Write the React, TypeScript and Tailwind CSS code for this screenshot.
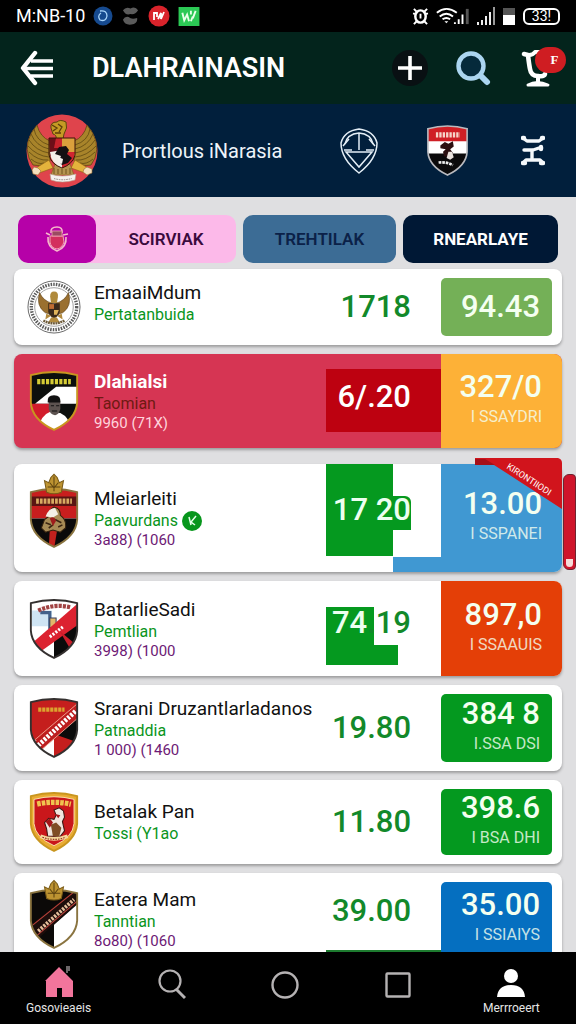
import type { ReactNode } from "react";
import clsx from "clsx";

type CrestKind =
  | "garuda"
  | "portrait"
  | "crowned"
  | "sash"
  | "redSash"
  | "gold"
  | "black"
  | "tricolor";

type Row = {
  id: number;
  crest: CrestKind;
  name: string;
  team: string;
  meta?: string;
  verified?: boolean;
  value: string;
  price: string;
  unit?: string;
  height: string;
  card: string;
  nameClass: string;
  teamClass: string;
  metaClass: string;
  valueClass: string;
  tile: string;
  inset: boolean;
};

const FONT = "font-['Roboto','Noto_Sans',sans-serif]";

const light = {
  card: "bg-white",
  nameClass: "text-[#111111]",
  teamClass: "text-[#0a951c]",
  metaClass: "text-[#6d1a75]",
  valueClass: "text-[#12892a]",
};

const rows: Row[] = [
  {
    ...light,
    id: 1,
    crest: "garuda",
    name: "EmaaiMdum",
    team: "Pertatanbuida",
    value: "1718",
    price: "94.43",
    height: "min-h-[76px]",
    teamClass: "text-[#0a951c] pb-2",
    tile: "bg-[#74b057]",
    inset: true,
  },
  {
    id: 2,
    crest: "portrait",
    name: "Dlahialsi",
    team: "Taomian",
    meta: "9960 (71X)",
    value: "6/.20",
    price: "327/0",
    unit: "I SSAYDRI",
    height: "min-h-[94px]",
    card: "bg-[#d63553] mb-[7px]",
    nameClass: "text-white font-bold",
    teamClass: "text-[#6e1a12]",
    metaClass: "text-[#ffd3dc]",
    valueClass: "text-white pb-2",
    tile: "bg-[#fdb137]",
    inset: false,
  },
  {
    ...light,
    id: 3,
    crest: "crowned",
    name: "Mleiarleiti",
    team: "Paavurdans",
    meta: "3a88) (1060",
    verified: true,
    value: "17 20",
    price: "13.00",
    unit: "I SSPANEI",
    height: "min-h-[108px]",
    valueClass: "text-[#ecfff0] pb-4",
    tile: "bg-[#4098d2]",
    inset: false,
  },
  {
    ...light,
    id: 4,
    crest: "sash",
    name: "BatarlieSadi",
    team: "Pemtlian",
    meta: "3998) (1000",
    value: "74.19",
    price: "897,0",
    unit: "I SSAAUIS",
    height: "min-h-[95px]",
    valueClass: "text-[#12892a] pb-3",
    tile: "bg-[#e43f07]",
    inset: false,
  },
  {
    ...light,
    id: 5,
    crest: "redSash",
    name: "Srarani Druzantlarladanos",
    team: "Patnaddia",
    meta: "1 000) (1460",
    value: "19.80",
    price: "384 8",
    unit: "I.SSA DSI",
    height: "min-h-[86px]",
    tile: "bg-[#04991f]",
    inset: true,
  },
  {
    ...light,
    id: 6,
    crest: "gold",
    name: "Betalak Pan",
    team: "Tossi (Y1ao",
    value: "11.80",
    price: "398.6",
    unit: "I BSA DHI",
    height: "min-h-[84px]",
    tile: "bg-[#04991f]",
    inset: true,
  },
  {
    ...light,
    id: 7,
    crest: "black",
    name: "Eatera Mam",
    team: "Tanntian",
    meta: "8o80) (1060",
    value: "39.00",
    price: "35.00",
    unit: "I SSIAIYS",
    height: "min-h-[92px]",
    valueClass: "text-[#12892a] pb-4",
    tile: "bg-[#056fc0]",
    inset: true,
  },
];

const SHIELD = "M3 4Q25 -2 47 4V30Q46 46 25 56Q4 46 3 30Z";

function HeaderGaruda() {
  return (
    <svg viewBox="0 0 72 74" className="h-[74px] w-[72px]" aria-hidden="true">
      <ellipse cx="36" cy="37" rx="35.5" ry="36.5" fill="#df444c" />
      <g fill="#a8842a" stroke="#55400f" strokeWidth=".7">
        <path d="M11 11Q-3 27 3 44L7 51Q17 53 24 47V27Q14 23 11 11Z" />
        <path d="M61 11Q75 27 69 44L65 51Q55 53 48 47V27Q58 23 61 11Z" />
        <path
          fill="none"
          d="M8 15Q10 27 23 31M5 20Q10 32 23 35M3 26Q10 37 23 39M2 32Q11 42 23 43M3 38Q12 47 22 46M5 45Q12 51 18 49M64 15Q62 27 49 31M67 20Q62 32 49 35M69 26Q62 37 49 39M70 32Q61 42 49 43M69 38Q60 47 50 46M67 45Q60 51 54 49"
        />
      </g>
      <g fill="#e4b33c" stroke="#8a5b14" strokeWidth=".6">
        <path d="M23 46L10 54L13 59L27 54Z" />
        <path d="M49 46L62 54L59 59L45 54Z" />
        <path d="M29 50H44L48 61H25Z" fill="#b4934f" />
      </g>
      <path d="M25 14Q24 8 31 8Q34 5 40 8Q42 14 38 20L37 25H30Q31 21 27 20Z" fill="#c59a24" stroke="#5d440c" />
      <path d="M26 11l5 3-4 3M32 10l4 3-3 5M29 19l6 0" fill="none" stroke="#5d3c0b" strokeWidth="1.300" />
      <path d="M23 24H36V40L24 42Z" fill="#6d0e18" />
      <path d="M36 24H49V42H36Z" fill="#dba03c" />
      <path d="M30 24h6v10h-8Z" fill="#c8222c" />
      <path d="M24 38L36 36V54Q25 50 24 38Z" fill="#f3eee8" />
      <path d="M36 38H49Q48 50 36 54Z" fill="#d02530" />
      <path d="M33 33l7-1 3 4-2 4 5 4-4 5-6 2-3-4 2-5-6-2Z" fill="#141012" />
      <path d="M32 43l5 2-1 5-4-2Z" fill="#f4f0ec" />
      <path d="M23 24H49V41Q47 50 36 54Q25 50 23 41Z" fill="none" stroke="#3a1508" />
      <path d="M28 54v6M32 55v5M36 55v5M40 55v5M44 54v6" stroke="#6f531e" />
      <path d="M24 60Q36 64 50 60L49 66Q36 70 25 66Z" fill="#f5f1ee" stroke="#b6a08f" strokeWidth=".6" />
      <path d="M28 64.500Q36 67 46 64.500" fill="none" stroke="#8f8580" strokeDasharray="1.500 1" />
      <path d="M8 53l4 1 3 3-3 4-5-1-1-4ZM58 55l3-2 5 2 0 4-5 2-4-3Z" fill="#f4dfbd" stroke="#9c6b2d" strokeWidth=".6" />
    </svg>
  );
}

function CardGaruda() {
  return (
    <svg viewBox="0 0 56 56" className="-mx-0.5 size-[54px] shrink-0" aria-hidden="true">
      <circle cx="28" cy="28" r="27" fill="#fff" stroke="#666" strokeWidth="1" />
      <circle cx="28" cy="28" r="23.500" fill="none" stroke="#5b5b5b" strokeWidth="3.500" strokeDasharray="1.600 1.200" />
      <circle cx="28" cy="28" r="20" fill="none" stroke="#888" strokeWidth=".8" />
      <path d="M13 13Q9 27 19 34L26 36V24Q17 22 13 13ZM43 13Q47 27 37 34L30 36V24Q39 22 43 13Z" fill="#9a7030" stroke="#5d421b" strokeWidth=".6" />
      <path d="M24 17Q24 12 28 12Q33 12 32 18L31 24H25Z" fill="#b08a3c" />
      <path d="M22 24H34V33Q33 38 28 40Q23 38 22 33Z" fill="#3b2a1b" />
      <path d="M23 25h5v5h-5Z" fill="#c06d33" />
      <path d="M28 31h5l-2 5h-3Z" fill="#e0b35a" />
      <path d="M20 35l5 2-6 4ZM36 35l-5 2 6 4ZM25 39h6l3 5H22Z" fill="#b28a3e" />
      <path d="M17 42q11 6 22 0" fill="none" stroke="#6c5a3a" strokeWidth="2.500" strokeDasharray="2 .6" />
    </svg>
  );
}

function Crest({ kind, className }: { kind: CrestKind; className: string }) {
  const id = `crest-${kind}`;
  return (
    <svg viewBox="2 0 46 57" className={clsx("shrink-0 overflow-visible", className)} aria-hidden="true">
      <clipPath id={id}>
        <path d={SHIELD} />
      </clipPath>
      <g clipPath={`url(#${id})`}>
        {kind === "portrait" && (
          <>
            <path d="M0 0h50v58H0Z" fill="#0c0f0d" />
            <path d="M7 31L27 15H50V31Z" fill="#fff" />
            <path d="M0 31H22V58H0Z" fill="#d21c2c" />
            <path d="M9 58Q12 42 21 39L31 40Q40 44 42 58Z" fill="#fff" />
            <path d="M20 28h11v8q-1 5-5 6q-5-1-6-6Z" fill="#5c5350" />
            <path d="M19 30Q18 23 25 23Q32 23 31 30Z" fill="#111" />
            <path d="M22 33h3M27 33h3M23 38h5" stroke="#111" />
            <path d="M9 10h32" stroke="#d5cc36" strokeWidth="5" strokeDasharray="3 1.2" />
          </>
        )}
        {kind === "crowned" && (
          <>
            <path d="M0 0h50v29H0Z" fill="#c81e1e" />
            <path d="M0 29h50v29H0Z" fill="#0b0a0a" />
            <path d="M3 8h44v9H3Z" fill="#5a1512" />
            <path d="M8 12.5h34" stroke="#d7ab62" strokeWidth="5" strokeDasharray="2.6 1" />
            <path d="M21 40h7l-3 18h-5Z" fill="#c3211d" />
            <path d="M13 38l3-8 4-3q0-6 5-9q6 1 6 8q6 4 5 12l-5 4-7-2-7 2Z" fill="#a78b55" stroke="#33210e" />
            <path d="M17 27q3-8 9-8l3 6-5 3Z" fill="#f3efe6" />
            <path d="M17 33l5 2M26 30l6 3M20 38l4-3M29 37l4-2" stroke="#3b2612" strokeWidth="1.500" />
            <path d="M21 29q4-3 6 2l-3 5Z" fill="#9e1c1c" />
          </>
        )}
        {kind === "sash" && (
          <>
            <path d="M0 0h50v58H0Z" fill="#fff" />
            <path d="M25 58V34L50 8V58Z" fill="#0b0b0b" />
            <path d="M4 11h19v15H4Z" fill="#cfe4f3" />
            <path d="M12 13h9v14h6" fill="none" stroke="#44618a" strokeWidth="3" />
            <path d="M21 18h6v9h-6Z" fill="#e2b76a" stroke="#3b3f5c" />
            <path d="M3 43L50 2V23L12 50Z" fill="#dc2230" />
            <path d="M21 36L34 26" stroke="#fff" strokeWidth="3" strokeDasharray="2 1.4" />
            <path d="M10 11Q26 4 41 8" fill="none" stroke="#a14343" strokeWidth="4" strokeDasharray="3 1" />
            <path d="M30 30L50 47V56L42 50Z" fill="#c81e2a" />
          </>
        )}
        {kind === "redSash" && (
          <>
            <path d="M0 0h50v58H0Z" fill="#c51e1d" />
            <path d="M25 36V58H0V42Z" fill="#fff" />
            <path d="M27 35L50 14V43Z" fill="#0b0b0b" />
            <path d="M3 45L50 4V17L10 52Z" fill="#bc1d1e" />
            <path d="M3 43L50 3M11 51L50 17" stroke="#f0b3a0" strokeWidth=".8" />
            <path d="M10 45L46 12" stroke="#fff" strokeWidth="4.5" strokeDasharray="2.4 1.4" />
            <path d="M10 11h25" stroke="#dba32f" strokeWidth="4" strokeDasharray="3 .8" />
          </>
        )}
        {kind === "gold" && (
          <>
            <path d="M0 0h50v58H0Z" fill="#e9ab32" />
            <path d="M6 7Q25 2 44 7V30Q43 43 25 51Q7 43 6 30Z" fill="#c9171b" stroke="#fff1c4" strokeWidth=".8" />
            <path d="M9 11.5Q25 8 41 11.5" fill="none" stroke="#f0c34f" strokeWidth="5" strokeDasharray="3.4 1" />
            <path d="M25 17l5-2 4 3 1 6-2 4 2 9-4 5H19l-1-7-2-6 4-4 5 1 2-4Z" fill="#f0e5de" stroke="#3c1612" />
            <path d="M22 31l5-2 5 5-2 8h-6Z" fill="#7e4d26" />
            <path d="M17 28l4-3 3 4-3 5ZM26 21l5 1-2 3Z" fill="#a5161a" />
            <path d="M12 42q13 5 26 0" fill="none" stroke="#f3d79b" strokeWidth="3.5" />
            <path d="M14 43q12 4 22 0" fill="none" stroke="#8b2417" strokeDasharray="1.5 1" />
          </>
        )}
        {kind === "black" && (
          <>
            <path d="M0 0h50v58H0Z" fill="#0b0908" />
            <path d="M25 58V34L50 12V58Z" fill="#fff" />
            <path d="M3 34L50 -3V11L8 49Z" fill="#1d0d0b" />
            <path d="M5 34L50 -2M9 44L50 9" stroke="#b8413a" strokeWidth="1" />
            <path d="M10 40L44 10" stroke="#e4bd9a" strokeWidth="3.6" strokeDasharray="2.2 1.2" />
          </>
        )}
        {kind === "tricolor" && (
          <>
            <path d="M0 0h50v20H0Z" fill="#cf1f25" />
            <path d="M0 18h50v15H0Z" fill="#fff" />
            <path d="M0 32h50v26H0Z" fill="#0b0a0b" />
            <path d="M12 11h27" stroke="#f6d5c9" strokeWidth="6" strokeDasharray="2.6 1.2" />
            <path d="M17 23l5-4 4 2 5-3 1 6-4 3 3 4-4 5-6-1-1-5 3-3-6-1Z" fill="#2b1011" />
            <path d="M26 30l4 0 2 6-4 3-4-2Z" fill="#e9e1dc" />
            <path d="M15 42q9-1 16 3" fill="none" stroke="#eee" strokeWidth="3" strokeDasharray="3 1" />
          </>
        )}
      </g>
      <path
        d={SHIELD}
        fill="none"
        strokeWidth="1.8"
        stroke={
          kind === "portrait" || kind === "gold"
            ? "#c9961f"
            : kind === "crowned" || kind === "black"
              ? "#8a7440"
              : kind === "tricolor"
                ? "#b9babf"
                : "#34302f"
        }
      />
      {(kind === "crowned" || kind === "black") && (
        <g transform={kind === "black" ? "translate(0 5)" : undefined}>
          <path
            d="M18 4L16 -7L20 -5L22 -10L25 -13L28 -10L30 -5L34 -7L32 4Q25 7 18 4Z"
            fill="#bd9331"
            stroke="#7a5b18"
          />
          <path d="M19 -1H31M21 -5L25 0L29 -5M25 -11V3" fill="none" stroke="#5d4310" />
        </g>
      )}
    </svg>
  );
}

function StatusBar() {
  return (
    <div className="flex h-8 shrink-0 items-center bg-black px-4 text-white">
      <span className="w-[77px] text-[18px] leading-6">M:NB-10</span>
      <div className="flex items-center gap-2">
        <svg viewBox="0 0 20 20" className="size-5" aria-hidden="true">
          <circle cx="10" cy="10" r="9.5" fill="#164a8f" />
          <path d="M7 5Q14 4 14 10Q13 16 7 14Q4 10 8 7" fill="none" stroke="#a9d5fa" strokeWidth="1.3" />
        </svg>
        <svg viewBox="0 0 18 20" className="mx-[1px] h-5 w-[17px]" aria-hidden="true">
          <path d="M1 4Q4 0 9 2Q14 -1 17 4Q14 9 9 8Q4 10 1 4ZM1 14Q3 10 7 11Q10 14 16 12Q17 18 10 19Q3 20 1 14Z" fill="#5b5b5b" />
        </svg>
        <svg viewBox="0 0 22 22" className="size-[22px]" aria-hidden="true">
          <circle cx="11" cy="11" r="10.5" fill="#d9232b" />
          <path d="M6 15V8h3v4M10 14l3-6v6l3-7" fill="none" stroke="#fff" strokeWidth="1.8" />
        </svg>
        <svg viewBox="0 0 22 20" className="h-[19px] w-[22px]" aria-hidden="true">
          <path d="M0 0h22v20H0Z" fill="#2cc955" />
          <path d="M4 6l2 8 3-6 2 7M13 4v4M13 15l2-5M18 4l-3 8" fill="none" stroke="#e9ffe9" strokeWidth="2" />
        </svg>
      </div>
      <div className="ml-auto flex items-center">
        <svg viewBox="0 0 18 20" className="h-[19px] w-[17px]" fill="none" stroke="#fff" strokeWidth="2" aria-hidden="true">
          <ellipse cx="9" cy="10" rx="5.5" ry="6.5" strokeWidth="2.600" />
          <path d="M2 2l3 3M16 2l-3 3M2 18l3-3M16 18l-3-3M1 7h3M14 7h3M9 7v5" />
        </svg>
        <svg viewBox="0 0 36 20" className="ml-1.5 h-[19px] w-9" aria-hidden="true">
          <path d="M1 6Q11 -2 22 6M4 10Q11 4 18 10M7 13Q11 10 15 13" fill="none" stroke="#fff" strokeWidth="2" />
          <path d="M11 17l-2-2h4Z" fill="#fff" />
          <path d="M20 18v-2M24 18v-5M28 18v-10" stroke="#fff" strokeWidth="2" />
          <path d="M33 18V2" stroke="#555" strokeWidth="3" />
        </svg>
        <svg viewBox="0 0 18 18" className="ml-1.5 h-[18px] w-[18px]" aria-hidden="true">
          <path d="M1 18v-3M5 18v-5M9 18v-9M13 18V5" stroke="#eee" strokeWidth="2" />
          <path d="M17 18V0" stroke="#999" strokeWidth="2" />
        </svg>
        <svg viewBox="0 0 12 17" className="ml-2 h-[17px] w-3" aria-hidden="true">
          <path d="M0 0h12v17H0Z" fill="#555" />
          <path d="M0 7h12v10H0Z" fill="#fff" />
        </svg>
        <span className="ml-2 flex h-[17px] w-[37px] items-center justify-center rounded-[6px] border-2 border-white text-[14px] leading-4">
          33!
        </span>
      </div>
    </div>
  );
}

function Header() {
  return (
    <header className="flex h-[72px] shrink-0 items-center bg-[#03241c] pr-2.5 pl-5 text-white">
      <button type="button" aria-label="Back" className="h-9 w-[34px]">
        <svg viewBox="0 0 34 36" className="h-9 w-[34px]" fill="none" stroke="currentColor" strokeWidth="3.4">
          <path d="M15 3L3 18L15 33" strokeWidth="4.4" strokeLinecap="round" strokeLinejoin="round" />
          <path d="M11 11H33M4 18.500H33M11 26H33" />
        </svg>
      </button>
      <h1 className="ml-[38px] text-[27px] leading-9 font-semibold">DLAHRAINASIN</h1>
      <button type="button" aria-label="Add" className="ml-auto flex size-9 items-center justify-center rounded-full bg-[#091013]">
        <svg viewBox="0 0 24 24" className="size-6" stroke="currentColor" strokeWidth="3.6">
          <path d="M12 0V24M0 12H24" />
        </svg>
      </button>
      <button type="button" aria-label="Search" className="ml-7 size-9">
        <svg viewBox="0 0 36 36" className="size-9" fill="none" stroke="#abd5f0">
          <circle cx="15" cy="16" r="12.500" strokeWidth="4.400" fill="#052a3b" />
          <path d="M25 26L31 32" strokeWidth="6" strokeLinecap="round" />
        </svg>
      </button>
      <button type="button" aria-label="Cart" className="relative ml-7 h-[46px] w-[46px]">
        <svg viewBox="0 0 46 46" className="h-[46px] w-[46px]" fill="none" stroke="#fff" strokeLinecap="round" strokeLinejoin="round" aria-hidden="true">
          <path d="M4 9L8 10Q9 19 10 24Q11 31 18 31Q24 32 25 29" strokeWidth="4.600" />
          <path d="M9 10Q13 10 15 7H20" strokeWidth="4" />
          <path d="M18 31V37" strokeWidth="4" />
          <path d="M8 40Q17 35 28 40Z" fill="#fff" strokeWidth="3" />
        </svg>
        <span className="absolute top-[2px] right-0 flex h-[26px] w-[31px] items-center justify-center rounded-full bg-[#cf1d22] pl-2 font-['Liberation_Serif',serif] text-[13px] leading-4 font-bold">
          F
        </span>
      </button>
    </header>
  );
}

function LeagueBar() {
  return (
    <div className="flex h-[93px] shrink-0 items-center bg-[#011f3c] pr-[31px] pl-[26px] text-[#eef4fa]">
      <HeaderGaruda />
      <h2 className="ml-6 text-[20px] leading-8">Prortlous iNarasia</h2>
      <button type="button" aria-label="League badge" className="ml-auto h-[46px] w-[38px]">
        <svg viewBox="0 0 38 46" className="h-[46px] w-[38px]" fill="none" stroke="#e4eef6" strokeWidth="1.500">
          <path d="M19 1Q34 3 37 15Q37 31 19 45Q1 31 1 15Q4 3 19 1Z" />
          <path d="M5 16Q7 6 19 5Q31 6 33 16M6 24H32L19 39Z" />
          <path d="M19 6V22M3 18L9 11M35 18L29 11M4 22H12M26 22H34" />
        </svg>
      </button>
      <button type="button" aria-label="Club badge" className="ml-[49px] h-[51px] w-[41px]">
        <Crest kind="tricolor" className="h-[51px] w-[41px]" />
      </button>
      <button type="button" aria-label="Filter" className="ml-[53px] h-8 w-6">
        <svg viewBox="0 0 24 32" className="h-8 w-6" fill="none" stroke="#f5f9fc" strokeWidth="3.400" strokeLinecap="round" strokeLinejoin="round">
          <path d="M2 3L6 6H18L22 3M3 15H12L18 13M11 15V23M2 28L5 25H19L22 28" />
          <path d="M2 3H3M21 3H22M2 28H4M20 28H22M20 12V14" strokeWidth="4.400" />
        </svg>
      </button>
    </div>
  );
}

function Tabs() {
  return (
    <nav className="grid h-12 grid-cols-[218fr_153fr_155fr] gap-[7px] px-1 text-[17px] leading-6">
      <button type="button" className="flex items-stretch rounded-[10px] bg-[#fcb9e9] text-[#3a0a3d]">
        <span className="flex w-[78px] items-center justify-center rounded-[10px] bg-[#b601a8]">
          <svg viewBox="0 0 24 26" className="h-[26px] w-6" aria-hidden="true">
            <path d="M6 7Q5 1 12 1Q18 1 17 7M1 7L5 9M23 8L18 9M3 11Q2 21 12 25Q22 21 21 11" fill="none" stroke="#f5b8c9" strokeWidth="1.600" />
            <path d="M5 10H18L19 16Q17 22 12 23Q6 22 5 16Z" fill="#d3305e" stroke="#f3a3b4" />
            <path d="M7 5h10v5H7Z" fill="#9b4b62" stroke="#f3a3b4" strokeWidth=".8" />
          </svg>
        </span>
        <span className="flex flex-1 items-center justify-center font-semibold">SCIRVIAK</span>
      </button>
      <button type="button" className="rounded-[10px] bg-[#3c6c95] font-semibold text-[#0b2148]">
        TREHTILAK
      </button>
      <button type="button" className="rounded-[10px] bg-[#001835] font-bold text-white">
        RNEARLAYE
      </button>
    </nav>
  );
}

// coloured blocks that sit behind the middle figure
function ValueBackdrop({ id }: { id: number }) {
  if (id === 2) {
    return <div className="absolute inset-x-0 top-[15px] bottom-4 bg-[#bd0110]" />;
  }
  if (id === 3) {
    return (
      <>
        <div className="absolute top-0 bottom-4 left-0 w-[67px] bg-[#05991f]" />
        <div className="absolute top-8 left-[67px] h-[34px] w-[18px] rounded-tr-[6px] bg-[#05991f]" />
        <div className="absolute right-0 bottom-0 left-[67px] h-[15px] bg-[#4098d2]" />
      </>
    );
  }
  if (id === 4) {
    return (
      <>
        <div className="absolute top-[26px] bottom-[11px] left-0 w-12 bg-[#05991f]" />
        <div className="absolute bottom-[11px] left-0 h-5 w-[72px] bg-[#05991f]" />
      </>
    );
  }
  if (id === 7) {
    return <div className="absolute inset-x-0 bottom-0 h-[15px] bg-[#1d7b2f]" />;
  }
  return null;
}

function Ribbon() {
  return (
    <svg viewBox="0 0 87 51" className="absolute -top-1.5 right-0 h-[51px] w-[87px]" aria-hidden="true">
      <path d="M0 0H83Q87 1 87 5V51L19 7H0Z" fill="#d1141c" />
      <path d="M0 1H10L20 7H0Z" fill="#a50f18" />
      <text x="31" y="10" transform="rotate(33 31 10)" fill="#fff" fontSize="9" fontFamily="Roboto">
        KIRONTIIODI
      </text>
    </svg>
  );
}

function Value({ row }: { row: Row }) {
  if (row.id !== 4) return <>{row.value}</>;
  return (
    <>
      <span className="text-[#ecfff0]">74</span>.19
    </>
  );
}

function ClubCard({ row }: { row: Row }) {
  return (
    <li
      className={clsx(
        "relative flex rounded-[8px] shadow-[0_2px_3px_rgba(0,0,0,0.3)]",
        row.card,
        row.height,
      )}
    >
      <div className="flex min-w-0 flex-1 items-center pl-[15px]">
        {row.crest === "garuda" ? (
          <CardGaruda />
        ) : (
          <Crest kind={row.crest} className="h-[60px] w-[50px]" />
        )}
        <div className="ml-[15px] whitespace-nowrap">
          <div className={clsx("text-[19px] leading-6", row.nameClass)}>{row.name}</div>
          <div className={clsx("flex items-center gap-1 text-[16px] leading-5", row.teamClass)}>
            {row.team}
            {row.verified && (
              <svg viewBox="0 0 20 20" className="size-5" aria-hidden="true">
                <circle cx="10" cy="10" r="10" fill="#07961c" />
                <path d="M7 6l2 8M14 5l-5 6 4 3" fill="none" stroke="#e5ffe9" strokeWidth="1.500" />
              </svg>
            )}
          </div>
          {row.meta && <div className={clsx("text-[15px] leading-[18px]", row.metaClass)}>{row.meta}</div>}
        </div>
      </div>
      <div className="relative flex w-[115px] shrink-0">
        <ValueBackdrop id={row.id} />
        <div
          className={clsx(
            "relative flex flex-1 items-center justify-end pr-[30px] text-[31px] leading-9 font-medium whitespace-nowrap",
            row.valueClass,
          )}
        >
          <span>
            <Value row={row} />
          </span>
        </div>
      </div>
      <div className={clsx("flex w-[121px] shrink-0", row.inset && "py-[9px] pr-[10px]")}>
        <div
          className={clsx(
            "flex flex-1 flex-col items-end justify-center text-[#f4fff0]",
            row.tile,
            row.inset ? "rounded-[5px] pr-3" : "rounded-r-[8px] pr-5",
          )}
        >
          <div className="text-[31px] leading-8 font-medium whitespace-nowrap">{row.price}</div>
          {row.unit && <div className="text-[16px] leading-7 opacity-80">{row.unit}</div>}
        </div>
      </div>
      {row.id === 3 && <Ribbon />}
    </li>
  );
}

function NavItem({ label, text, children }: { label: string; text?: string; children: ReactNode }) {
  return (
    <button type="button" aria-label={label} className="flex flex-col items-center pt-3.5 text-[12px] leading-4">
      {children}
      {text && <span className="mt-0.5">{text}</span>}
    </button>
  );
}

function BottomNav() {
  return (
    <nav className="grid h-[72px] shrink-0 grid-cols-5 bg-black pr-2 pl-0.5 text-[#e6e6e6]">
      <NavItem label="Home" text="Gosovieaeis">
        <svg viewBox="0 0 28 32" className="h-8 w-7" aria-hidden="true">
          <path d="M14 1L28 15V31H17V22H12V31H1V15H0Z" fill="#f2759c" />
          <path d="M22 0v7M24 0v5" stroke="#6b6668" strokeWidth="2" />
        </svg>
      </NavItem>
      <NavItem label="Search">
        <svg viewBox="0 0 28 32" className="mt-0.5 h-8 w-7" fill="none" stroke="#b5b2b3" strokeWidth="2.200">
          <circle cx="12" cy="13" r="10.500" />
          <path d="M18 21L27 30" strokeWidth="3" />
        </svg>
      </NavItem>
      <NavItem label="Overview">
        <svg viewBox="0 0 28 28" className="mt-[5px] size-7" fill="none" stroke="#b5b2b3" strokeWidth="2.400">
          <circle cx="14" cy="14" r="12.500" />
        </svg>
      </NavItem>
      <NavItem label="Recent">
        <svg viewBox="0 0 26 26" className="mt-1.5 size-[26px]" fill="none" stroke="#b5b2b3" strokeWidth="2.400">
          <rect x="1.500" y="1.500" width="23" height="23" rx="1" />
        </svg>
      </NavItem>
      <NavItem label="Profile" text="Merrroeert">
        <svg viewBox="0 0 28 32" className="h-8 w-7" fill="#fff" aria-hidden="true">
          <circle cx="14" cy="10" r="7" />
          <path d="M0 31Q1 19 14 19Q27 19 28 31Z" />
        </svg>
      </NavItem>
    </nav>
  );
}

export default function App() {
  return (
    <div className={clsx("flex h-screen flex-col bg-[#dfdfe1]", FONT)}>
      <StatusBar />
      <Header />
      <LeagueBar />
      <main className="relative min-h-0 flex-1 overflow-hidden px-[14px] pt-[18px]">
        <Tabs />
        <ul className="mt-1.5 flex flex-col gap-[9px]">
          {rows.map((row) => (
            <ClubCard key={row.id} row={row} />
          ))}
        </ul>
        <div className="absolute top-[277px] right-0 flex h-24 w-[13px] flex-col justify-end rounded-l-[6px] rounded-r-[4px] border border-[#6e2430] bg-[#cf152b] p-0.5">
          <span className="h-2 rounded-b-[4px] bg-[#f6dcd9]" />
        </div>
      </main>
      <BottomNav />
    </div>
  );
}
